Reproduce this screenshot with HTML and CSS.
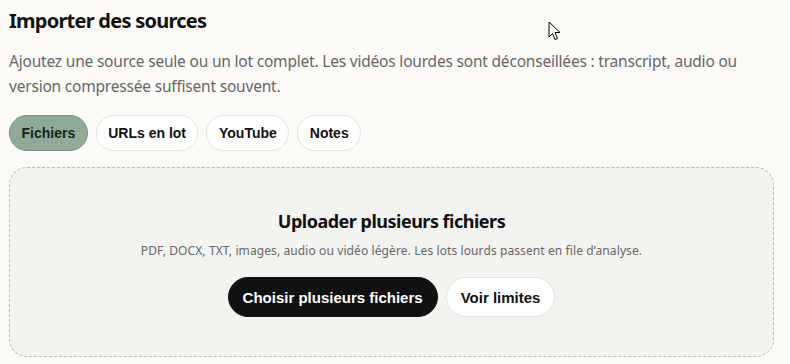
FILE: index.html
```html
<!DOCTYPE html>
<html lang="fr">
<head>
    <meta charset="UTF-8">
    <meta name="viewport" content="width=device-width, initial-scale=1.0">
    <title>Importer des sources</title>
    <link rel="stylesheet" href="styles.css">
</head>
<body>
    <div class="import">
        <h1>Importer des sources</h1>
        <p class="intro">
            Ajoutez une source seule ou un lot complet. Les vidéos lourdes sont déconseillées : transcript, audio ou
            version compressée suffisent souvent.
        </p>

        <div class="tabs">
            <button class="tab active">Fichiers</button>
            <button class="tab">URLs en lot</button>
            <button class="tab">YouTube</button>
            <button class="tab">Notes</button>
        </div>

        <div class="drop">
            <h2>Uploader plusieurs fichiers</h2>
            <p>PDF, DOCX, TXT, images, audio ou vidéo légère. Les lots lourds passent en file d’analyse.</p>
            <div class="actions">
                <button class="btn dark">Choisir plusieurs fichiers</button>
                <button class="btn light">Voir limites</button>
            </div>
        </div>
    </div>

    <svg class="cursor" width="14" height="22" viewBox="0 0 14 22">
        <path d="M1 1 L1 16 L4.5 12.5 L7 18.5 L9.5 17.5 L7 11.5 L12 11.5 Z" fill="#fff" stroke="#000" stroke-width="1"/>
    </svg>
</body>
</html>
```

FILE: styles.css
```css
body{
    margin: 0;
    background-color: #fcfaf7;
    font-family: "Noto Sans", "Open Sans", sans-serif;
    color: #111;
}

.import{
    width: 765px;
    margin-left: 9px;
    padding-top: 6px;
}

h1{
    margin: 0;
    font-size: 20px;
    font-weight: 700;
    letter-spacing: -0.75px;
    line-height: 30px;
}

.intro{
    margin: 13px 0 0;
    font-size: 15.5px;
    line-height: 25px;
    color: #666;
    letter-spacing: -0.2px;
}

.tabs{
    display: flex;
    gap: 8px;
    margin-top: 16px;
}

.tab{
    height: 36px;
    padding: 0 11.5px;
    border: 1px solid #e6e4df;
    border-radius: 18px;
    background-color: #fff;
    font-family: "Liberation Sans", Arial, sans-serif;
    font-size: 14px;
    font-weight: 700;
    color: #111;
}

.tab.active{
    background-color: #8fab98;
    border-color: #74927d;
    color: #14241a;
}

.drop{
    margin-top: 16px;
    height: 190px;
    border: 1px dashed #b4c1b6;
    border-radius: 18px;
    background-color: #f3f3ef;
    text-align: center;
    padding-top: 1px;
    box-sizing: border-box;
}

.drop h2{
    margin: 38px 0 0;
    font-size: 18px;
    font-weight: 700;
    letter-spacing: -0.5px;
    line-height: 28px;
}

.drop p{
    margin: 6px 0 0;
    font-size: 12px;
    color: #666;
    line-height: 20px;
    letter-spacing: 0.1px;
}

.actions{
    display: flex;
    justify-content: center;
    gap: 8px;
    margin-top: 16px;
}

.btn{
    height: 40px;
    padding: 0 14px;
    border-radius: 20px;
    font-family: "Liberation Sans", Arial, sans-serif;
    font-size: 15px;
    font-weight: 700;
}

.btn.dark{
    background-color: #111;
    color: #fff;
    border: 1px solid #111;
}

.btn.light{
    background-color: #fff;
    color: #111;
    border: 1px solid #e6e4df;
}

.cursor{
    position: absolute;
    left: 548px;
    top: 21px;
}
```
